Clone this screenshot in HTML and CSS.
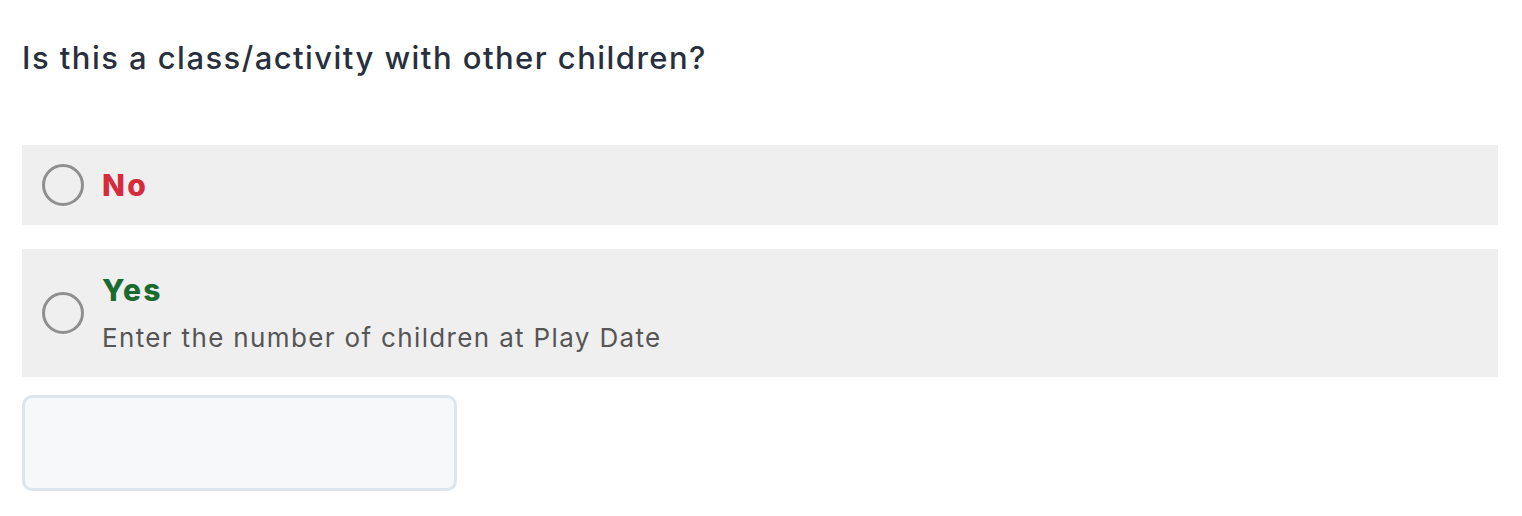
FILE: index.html
```html
<!DOCTYPE html>
<html>
<head>
<meta charset="utf-8">
<link rel="stylesheet" href="styles.css">
</head>
<body>
<div class="page">
  <h2 class="question">Is this a class/activity with other children?</h2>
  <label class="option">
    <span class="radio"></span>
    <span class="option-text">
      <span class="label no">No</span>
    </span>
  </label>
  <label class="option option-tall">
    <span class="radio"></span>
    <span class="option-text">
      <span class="label yes">Yes</span>
      <span class="hint">Enter the number of children at Play Date</span>
    </span>
  </label>
  <input class="count" type="text">
</div>
</body>
</html>
```
FILE: styles.css
```css
html, body {
  margin: 0;
  padding: 0;
  background: #ffffff;
}
.page {
  padding: 0 24px 0 22px;
  display: flex;
  flex-direction: column;
  font-family: "Inter", "Liberation Sans", sans-serif;
}
.question {
  margin: 38px 0 0 0;
  font-size: 31px;
  line-height: 40px;
  font-weight: 500;
  color: #283040;
  letter-spacing: 1.45px;
}
.option {
  display: flex;
  align-items: center;
  gap: 18px;
  background: #efefef;
  padding: 0 20px;
  height: 80px;
  box-sizing: border-box;
  margin-top: 67px;
}
.option-tall {
  height: 128px;
  margin-top: 24px;
}
.radio {
  width: 42px;
  height: 42px;
  box-sizing: border-box;
  border: 3px solid #8f8f8f;
  border-radius: 50%;
  flex: none;
}
.option-text {
  display: flex;
  flex-direction: column;
  gap: 14px;
}
.label {
  font-size: 30px;
  font-weight: 800;
  line-height: 36px;
  letter-spacing: 2.2px;
}
.no { color: #d62b3d; }
.yes { color: #1b6b31; }
.hint {
  font-size: 26px;
  line-height: 32px;
  color: #555555;
  font-weight: 400;
  letter-spacing: 1.35px;
}
.count {
  margin-top: 18px;
  width: 435px;
  height: 96px;
  box-sizing: border-box;
  border: 3px solid #dfe5ec;
  border-radius: 10px;
  background: #f7f8fa;
  outline: none;
}
```
